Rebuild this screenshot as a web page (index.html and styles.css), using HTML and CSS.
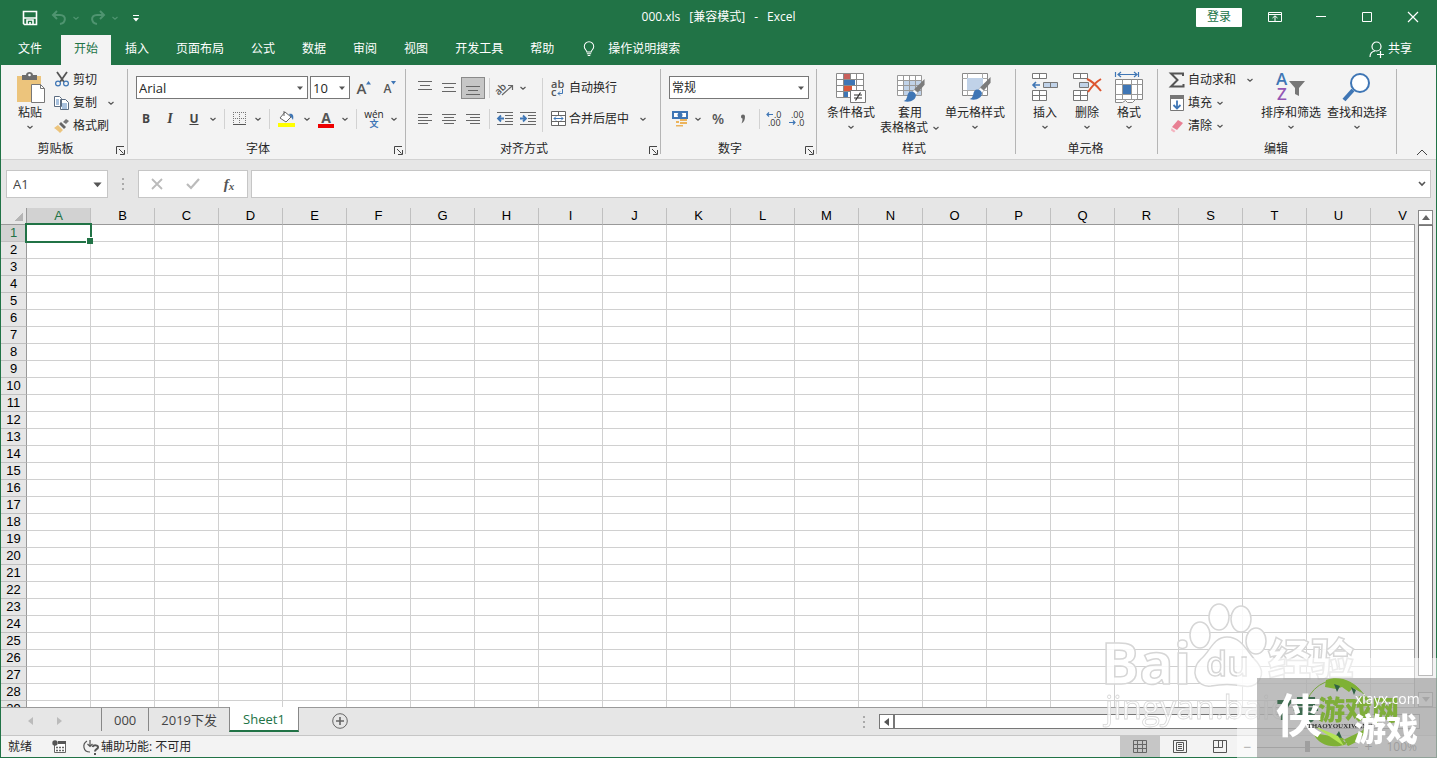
FILE: index.html
```html
<!DOCTYPE html>
<html lang="zh-CN">
<head>
<meta charset="utf-8">
<title>000.xls - Excel</title>
<link rel="stylesheet" href="styles.css">
</head>
<body>
<svg class="defs" aria-hidden="true">
  <symbol id="chev" viewBox="0 0 8 8"><path d="M1.5 3 4 5.2 6.5 3" fill="none" stroke="currentColor" stroke-width="1.2"/></symbol>
  <symbol id="tri" viewBox="0 0 8 8"><path d="M1 2.5h6L4 6z" fill="currentColor"/></symbol>
  <symbol id="launch" viewBox="0 0 9 9"><path d="M.5 8V.5H8M3 3l4.5 4.5M8.5 4v4.5H4" fill="none" stroke="#444"/></symbol>
  <symbol id="brush" viewBox="0 0 24 26"><path d="M23 0v6l-7 8-4-3z" fill="#7c7c7c"/><path d="m12 11 4 3-2 3-4-3z" fill="#fff" stroke="#999" stroke-width=".6"/><path d="M9 13c3 0 5 2 5 4 0 5-6 8-13 6 3-1 3-2 4-5 .5-3 2-5 4-5z" fill="#3f76b5"/></symbol>
</svg>
<div class="app">
  <header class="titlebar">
    <div class="quick">
      <button aria-label="保存"><svg width="16" height="16"><path d="M1.5 1.5h13v13h-12l-1-1z" fill="none" stroke="#fff" stroke-width="1.6"/><path d="M2 8h12M5 14v-4h6v4M8 14v-2" fill="none" stroke="#fff" stroke-width="1.6"/></svg></button>
      <button class="dim" aria-label="撤消"><svg width="16" height="16"><path d="M6 1 2 5l4 4M2 5h7c7 0 6 8 0 9" fill="none" stroke="currentColor" stroke-width="2"/></svg></button>
      <svg class="chev dim"><use href="#chev"/></svg>
      <button class="dim redo" aria-label="恢复"><svg width="16" height="16"><path d="m10 1 4 4-4 4M14 5H7c-7 0-6 8 0 9" fill="none" stroke="currentColor" stroke-width="2"/></svg></button>
      <svg class="chev dim"><use href="#chev"/></svg>
      <button class="custom" aria-label="自定义"><svg width="8" height="8"><path d="M1 1.5h6" stroke="#fff"/><path d="M1 4h6L4 7.500z" fill="#fff"/></svg></button>
    </div>
    <div class="doc"><span>000.xls</span><span>[兼容模式]</span><span>-</span><span>Excel</span></div>
    <div class="win">
      <button class="login">登录</button>
      <button aria-label="功能区显示选项"><svg width="14" height="12"><path d="M.5 1.500h13v9H.5zM.5 3.500h13M7 10V5M4.500 7 7 4.800 9.500 7" fill="none" stroke="#fff"/></svg></button>
      <button aria-label="最小化"><svg width="12" height="12"><path d="M1 5.500h10" stroke="#fff"/></svg></button>
      <button aria-label="最大化"><svg width="12" height="12"><path d="M1.500 1.500h9v9h-9z" fill="none" stroke="#fff"/></svg></button>
      <button aria-label="关闭"><svg width="12" height="12"><path d="m1 1 10 10M11 1 1 11" stroke="#fff" stroke-width="1.200"/></svg></button>
    </div>
  </header>
  <nav class="tabs">
    <button class="file">文件</button><button class="on">开始</button><button>插入</button><button>页面布局</button><button>公式</button><button>数据</button><button>审阅</button><button>视图</button><button>开发工具</button><button>帮助</button>
    <button class="tell"><svg width="12" height="16" viewBox="0 0 14 18"><path d="M4.500 12.500c0-2-3-3-3-6.500a5.500 5.500 0 0 1 11 0c0 3.500-3 4.500-3 6.500zM4.500 14.500h5M5.500 16.500h3" fill="none" stroke="#fff" stroke-width="1.200"/></svg>操作说明搜索</button>
    <button class="share"><svg width="16" height="17"><circle cx="7.500" cy="5.500" r="4.500" fill="none" stroke="#fff" stroke-width="1.200"/><path d="M1 16c0-3.500 2-5.500 5-6M8 13.500h7M11.500 10v7" fill="none" stroke="#fff" stroke-width="1.200"/></svg>共享</button>
  </nav>

  <section class="ribbon">
    <div class="group clip">
      <div class="body">
        <button class="big w42"><svg width="26" height="32"><path d="M0 4h24v26H0z" fill="#ecc47c"/><path d="M5 3h4c0-4 7-4 7 0h4v5H5z" fill="#6d6d6d"/><circle cx="12.500" cy="3" r="1.300" fill="#fff"/><path d="M14.500 12.500h9l4 4v14h-13z" fill="#fff" stroke="#777"/><path d="M23.500 12.500v4h4" fill="none" stroke="#777"/></svg><span>粘贴</span><svg class="chev"><use href="#chev"/></svg></button>
        <div class="stack">
          <button><i class="ico"><svg width="14" height="15"><path d="m2 0 7 10M12 0 5 10" stroke="#555" stroke-width="1.800"/><circle cx="3" cy="11.500" r="2.400" fill="none" stroke="#3f76b5" stroke-width="1.200"/><circle cx="11" cy="11.500" r="2.400" fill="none" stroke="#3f76b5" stroke-width="1.200"/></svg></i>剪切</button>
          <button><i class="ico"><svg width="16" height="14"><path d="M.5.5h5l2 2v8h-7zM6.500 3.500h5l3 3v7h-8z" fill="#fff" stroke="#5a6b80"/><path d="M2 4h3M2 6h3M2 8h3M8 8h5M8 10h5M8 12h5" stroke="#3f76b5" stroke-width=".9"/></svg></i>复制<svg class="chev gap"><use href="#chev"/></svg></button>
          <button><i class="ico"><svg width="16" height="14"><path d="m9 3 3-3 3 2-3 3z" fill="#777"/><path d="m7 3 5 5-2 2-5-5z" fill="#666"/><path d="m4 6 5 5-3 3C4 12 2 10 0 9z" fill="#ecc47c"/></svg></i>格式刷</button>
        </div>
      </div>
      <div class="cap"><span>剪贴板</span><button aria-label="剪贴板设置"><svg width="9" height="9"><use href="#launch"/></svg></button></div>
    </div>

    <div class="group font">
      <div class="body rows">
        <div class="row tight">
          <label class="sel fname"><select aria-label="字体"><option>Arial</option></select><svg class="chev"><use href="#tri"/></svg></label>
          <label class="sel fsize"><select aria-label="字号"><option>10</option></select><svg class="chev"><use href="#tri"/></svg></label>
          <button class="b24 grow" aria-label="增大字号"><span class="fa">A</span><svg width="5" height="4"><path d="M0 3.500h5L2.500 0z" fill="#3f76b5"/></svg></button>
          <button class="b24 shrink" aria-label="减小字号"><span class="fb">A</span><svg width="5" height="4"><path d="M0 0h5L2.500 3.500z" fill="#3f76b5"/></svg></button>
        </div>
        <div class="row marks">
          <button class="b24 bold">B</button><button class="b24 ital">I</button><button class="b24 under">U</button><button class="dd" aria-label="下划线"><svg class="chev"><use href="#chev"/></svg></button>
          <hr>
          <button class="b22" aria-label="边框"><svg width="14" height="14"><path d="M.5 0v13M6.500 0v13M12.500 0v13M0 .5h13M0 6.500h13" stroke="#777" stroke-dasharray="1 1"/><path d="M0 12.500h13" stroke="#555"/></svg></button><button class="dd" aria-label="边框选项"><svg class="chev"><use href="#chev"/></svg></button>
          <hr>
          <button class="b26" aria-label="填充颜色"><svg width="18" height="17"><path d="m7 2 6 5-5 5-6-4zM6 6V1" fill="#fff" stroke="#666"/><path d="M11 4c4-1 5 2 4 6-1-2-2-3-4-6z" fill="#3f76b5"/><path d="M0 13h17v4H0z" fill="#ff0"/></svg></button><button class="dd" aria-label="填充选项"><svg class="chev"><use href="#chev"/></svg></button>
          <button class="b24 color" aria-label="字体颜色"><span>A</span></button><button class="dd" aria-label="颜色选项"><svg class="chev"><use href="#chev"/></svg></button>
          <hr>
          <button class="b26 wen" aria-label="拼音"><span>wén</span><b>文</b></button><button class="dd" aria-label="拼音选项"><svg class="chev"><use href="#chev"/></svg></button>
        </div>
      </div>
      <div class="cap"><span>字体</span><button aria-label="字体设置"><svg width="9" height="9"><use href="#launch"/></svg></button></div>
    </div>

    <div class="group align">
      <div class="body cols">
        <div class="rows">
          <div class="row">
            <button class="b24" aria-label="顶端对齐"><svg width="14" height="14"><path d="M0 .5h14M2 4.500h10M0 8.500h14" class="ln"/></svg></button>
            <button class="b24" aria-label="垂直居中"><svg width="14" height="14"><path d="M0 2.500h14M2 6.500h10M0 10.500h14" class="ln"/></svg></button>
            <button class="b24 pressed" aria-label="底端对齐"><svg width="14" height="14"><path d="M0 5.500h14M2 9.500h10M0 13.500h14" class="ln"/></svg></button>
            <hr>
            <button class="b22" aria-label="方向"><svg width="18" height="16"><text x="-2" y="11" transform="rotate(-45 6 8)" class="abrot">ab</text><path d="m6 15 10-9M12 5.500h4.500V10" fill="none" stroke="#666" stroke-width="1.200"/></svg></button><button class="dd" aria-label="方向选项"><svg class="chev"><use href="#chev"/></svg></button>
          </div>
          <div class="row">
            <button class="b24" aria-label="左对齐"><svg width="14" height="12"><path d="M0 1.500h14M0 4.500h10M0 7.500h14M0 10.500h10" class="ln"/></svg></button>
            <button class="b24" aria-label="居中"><svg width="14" height="12"><path d="M0 1.500h14M2 4.500h10M0 7.500h14M2 10.500h10" class="ln"/></svg></button>
            <button class="b24" aria-label="右对齐"><svg width="14" height="12"><path d="M0 1.500h14M4 4.500h10M0 7.500h14M4 10.500h10" class="ln"/></svg></button>
            <hr>
            <button class="b22" aria-label="减少缩进"><svg width="16" height="14"><path d="M0 .5h16M8 3.500h8M8 6.500h8M8 9.500h8M0 12.500h16" class="ln"/><path d="M7 6.500H1M4 3.500l-3 3 3 3" fill="none" stroke="#3f76b5" stroke-width="1.800"/></svg></button>
            <button class="b24" aria-label="增加缩进"><svg width="16" height="14"><path d="M0 .5h16M8 3.500h8M8 6.500h8M8 9.500h8M0 12.500h16" class="ln"/><path d="M0 6.500h6M3 3.500l3 3-3 3" fill="none" stroke="#3f76b5" stroke-width="1.800"/></svg></button>
          </div>
        </div>
        <hr class="tall">
        <div class="rows">
          <div class="row"><button class="txt"><i class="ico"><svg width="14" height="18"><text x="0" y="9" class="ab">ab</text><text x="0" y="17" class="ab">c</text><path d="M11.500 10v4.500H7M9 12.500l-2 2 2 2" fill="none" stroke="#3f76b5"/></svg></i>自动换行</button></div>
          <div class="row"><button class="txt"><i class="ico"><svg width="15" height="15"><path d="M.5.5h14v14H.5zM.5 4.500h14M.5 10.500h14M7.500 1v3M7.500 11v3" fill="#fff" stroke="#666"/><path d="M3 7.500h9M5 5.500l-2 2 2 2M10 5.500l2 2-2 2" fill="none" stroke="#3f76b5"/></svg></i>合并后居中<svg class="chev gap"><use href="#chev"/></svg></button></div>
        </div>
      </div>
      <div class="cap"><span>对齐方式</span><button aria-label="对齐设置"><svg width="9" height="9"><use href="#launch"/></svg></button></div>
    </div>

    <div class="group num">
      <div class="body rows">
        <div class="row"><label class="sel nfmt"><select aria-label="数字格式"><option>常规</option></select><svg class="chev"><use href="#tri"/></svg></label></div>
        <div class="row">
          <button class="b22" aria-label="会计格式"><svg width="16" height="17"><path d="M0 1h16v8H0z" fill="#3f76b5"/><path d="M2 3h12v4H2z" fill="#fff"/><circle cx="8" cy="5" r="2.500" fill="#3f76b5"/><path d="M8 9h7v2H8zM8 12h7v2H8zM4 15h7v1.500H4zM4 11h3v2H4z" fill="#ecb45c"/></svg></button><button class="dd" aria-label="会计选项"><svg class="chev"><use href="#chev"/></svg></button>
          <button class="b26 pct">%</button><button class="b24 comma" aria-label="千位分隔"><svg width="6" height="10"><path d="M1 2.500a2 2 0 1 1 4 0C5 6 4 8 1.500 9.500 2 8 2.500 7 2.500 4.500 1.500 4.500 1 3.500 1 2.500z" fill="#666"/></svg></button>
          <hr>
          <button class="b20" aria-label="增加小数位数"><svg width="16" height="16"><text x="8" y="7" class="dec">.0</text><text x="2" y="15" class="dec">.00</text><path d="M7 3.500H1M3 1.500l-2 2 2 2" fill="none" stroke="#3f76b5" stroke-width="1.200"/></svg></button>
          <button class="b26" aria-label="减少小数位数"><svg width="16" height="16"><text x="2" y="7" class="dec">.00</text><text x="8" y="15" class="dec">.0</text><path d="M0 11.500h6M4 9.500l2 2-2 2" fill="none" stroke="#3f76b5" stroke-width="1.200"/></svg></button>
        </div>
      </div>
      <div class="cap"><span>数字</span><button aria-label="数字设置"><svg width="9" height="9"><use href="#launch"/></svg></button></div>
    </div>

    <div class="group styles">
      <div class="body">
        <button class="big w56"><svg width="30" height="32"><path d="M.5 1.500h27v24H.5z" fill="#fff"/><path d="M8 2h6v5H8z" fill="#c9605c"/><path d="M8 8h11v5H8z" fill="#3f76b5"/><path d="M8 14h8v5H8z" fill="#d9583b"/><path d="M8 20h4v5H8z" fill="#3f76b5"/><path d="M.5 1.500h27v24H.5zM.5 7.500h27M.5 13.500h27M.5 19.500h27M7.500 1.500v24M14.500 1.500v6M20.500 1.500v24" fill="none" stroke="#8a8a8a"/><path d="M14.500 18.500h15v12h-15z" fill="#fff" stroke="#777"/><path d="M18 23h8M18 26h8M24.500 20.500l-5 8" stroke="#333" stroke-width="1.200"/></svg><span>条件格式</span><svg class="chev"><use href="#chev"/></svg></button>
        <button class="big w62 two"><svg width="30" height="32"><path d="M2.500 3.500h24v20h-24z" fill="#fff"/><path d="M8 9h18v14H8z" fill="#c0d2e8"/><path d="M2.500 3.500h24v20h-24zM2.500 8.500h24M2.500 13.500h24M2.500 18.500h24M8.500 3.500v20M14.500 3.500v20M20.500 3.500v20" fill="none" stroke="#999"/><use href="#brush" x="7" y="7" width="24" height="25"/></svg><span>套用</span><span class="ln2">表格格式<svg class="chev"><use href="#chev"/></svg></span></button>
        <button class="big w68"><svg width="30" height="32"><path d="M2.500 1.500h25v22h-25z" fill="#fff" stroke="#888"/><path d="M2.500 6.500h25M2.500 18.500h25M7.500 1.500v22M22.500 1.500v22" stroke="#aaa"/><path d="M7 6h16v12H7z" fill="#c0d2e8"/><use href="#brush" x="8" y="5" width="24" height="25"/></svg><span>单元格样式</span><svg class="chev"><use href="#chev"/></svg></button>
      </div>
      <div class="cap"><span>样式</span></div>
    </div>

    <div class="group cells">
      <div class="body">
        <button class="big w42"><svg width="28" height="32"><path d="M1.500 1.500h14v5h-14zM8.500 1.500v5M1.500 18.500h14v10h-14zM1.500 23.500h14M8.500 18.500v10" fill="#fff" stroke="#777"/><path d="M12.500 10.500h14v5h-14zM19.500 10.500v5" fill="#c0d2e8" stroke="#777"/><path d="M9 13H2M5 10l-3 3 3 3" fill="none" stroke="#3f76b5" stroke-width="1.600"/></svg><span>插入</span><svg class="chev"><use href="#chev"/></svg></button>
        <button class="big w42"><svg width="30" height="32"><path d="M1.500 1.500h14v5h-14zM8.500 1.500v5M1.500 18.500h14v10h-14zM1.500 23.500h14M8.500 18.500v10" fill="#fff" stroke="#777"/><path d="M7.500 10.500h9v5h-9z" fill="#c0d2e8" stroke="#777"/><path d="M15 7c5 2 10 7 14 12M29 7c-5 3-9 7-13 13" fill="none" stroke="#dd5530" stroke-width="2"/></svg><span>删除</span><svg class="chev"><use href="#chev"/></svg></button>
        <button class="big w42"><svg width="28" height="32"><path d="M.5 0v5M23.500 0v5M3 2.500h19M6 0 3 2.500 6 5M19 0l3 2.500L19 5" fill="none" stroke="#3f76b5" stroke-width="1.200"/><path d="M.5 7.500h27v20h-7l-3 3h-5l-2-2-3 2h-7z" fill="#fff" stroke="#888"/><path d="M.5 12.500h27M.5 22.500h27M7.500 7.500v20M16.500 7.500v20M22.500 7.500v20M.5 27.500h20" stroke="#999"/><path d="M8 13h8v9H8z" fill="#3f76b5"/></svg><span>格式</span><svg class="chev"><use href="#chev"/></svg></button>
      </div>
      <div class="cap"><span>单元格</span></div>
    </div>

    <div class="group edit">
      <div class="body">
        <div class="stack">
          <button><i class="ico"><svg width="16" height="16"><path d="M14 4V1.500H2L8.500 8 2 14.500h12.500V12" fill="none" stroke="#555" stroke-width="2"/></svg></i>自动求和<svg class="chev gap"><use href="#chev"/></svg></button>
          <button><i class="ico"><svg width="14" height="16"><path d="M.5 1.500h13v14H.5z" fill="#fff" stroke="#777"/><path d="M0 0h14v4H0z" fill="#777"/><path d="M7 5.500v8M3.500 10 7 13.500l3.500-3.500" fill="none" stroke="#3f76b5" stroke-width="1.800"/></svg></i>填充<svg class="chev"><use href="#chev"/></svg></button>
          <button><i class="ico"><svg width="14" height="14"><path d="m8 1 5 3-6 7-5-3z" fill="#e87f93"/><path d="m1.500 9 4 3-1.500 1.500L1 11.500z" fill="#f4b3bf"/></svg></i>清除<svg class="chev"><use href="#chev"/></svg></button>
        </div>
        <button class="big w66"><svg width="30" height="32"><text x="0" y="13" class="az" fill="#3f76b5">A</text><text x="1" y="28" class="az" fill="#9457b5">Z</text><path d="M13 9h16l-6 7v8l-4-2v-6z" fill="#777"/></svg><span>排序和筛选</span><svg class="chev"><use href="#chev"/></svg></button>
        <button class="big w66"><svg width="30" height="32"><circle cx="18" cy="11" r="9" fill="#fff" stroke="#3f76b5" stroke-width="2"/><path d="M11 18 2 28" stroke="#3f76b5" stroke-width="4"/></svg><span>查找和选择</span><svg class="chev"><use href="#chev"/></svg></button>
      </div>
      <div class="cap"><span>编辑</span></div>
    </div>
    <button class="fold" aria-label="折叠功能区"><svg width="12" height="7"><path d="m1 6 5-5 5 5" fill="none" stroke="#444"/></svg></button>
  </section>

  <section class="formula">
    <label class="namebox"><input aria-label="名称框" value="A1"><svg class="chev"><use href="#tri"/></svg></label>
    <svg class="dots" width="2" height="12"><path d="M1 0v12" stroke="#aaa" stroke-width="2" stroke-dasharray="2 3"/></svg>
    <div class="fx">
      <button aria-label="取消"><svg width="12" height="12"><path d="m1 1 10 10M11 1 1 11" stroke="#bbb" stroke-width="1.800"/></svg></button>
      <button aria-label="输入"><svg width="14" height="12"><path d="m1 6 4 4 8-9" fill="none" stroke="#bbb" stroke-width="2.200"/></svg></button>
      <button class="fn">f<small>x</small></button>
    </div>
    <label class="entry"><input aria-label="编辑栏"><svg width="8" height="6"><path d="m1 1 3 3 3-3" fill="none" stroke="#555" stroke-width="1.600"/></svg></label>
  </section>

  <main class="sheet">
    <div class="view"><table id="grid"></table></div>
    <div class="vscroll">
      <button aria-label="向上"><svg width="8" height="5"><path d="M0 5h8L4 0z" fill="#666"/></svg></button>
      <div class="thumb"></div><div class="track"></div>
      <button class="down" aria-label="向下"><svg width="8" height="5"><path d="M0 0h8L4 5z" fill="#888"/></svg></button>
    </div>
  </main>

  <footer class="sheets">
    <div class="nav"><svg width="5" height="8"><path d="M5 0v8L0 4z" fill="#bbb"/></svg><svg width="5" height="8"><path d="M0 0v8l5-4z" fill="#bbb"/></svg></div>
    <button class="s">000</button><button class="s">2019下发</button><button class="s on">Sheet1</button>
    <button class="add" aria-label="新工作表"><svg width="16" height="16"><circle cx="8" cy="8" r="7.300" fill="none" stroke="#666"/><path d="M8 4v8M4 8h8" stroke="#666" stroke-width="1.600"/></svg></button>
    <svg class="dots" width="2" height="12"><path d="M1 0v12" stroke="#aaa" stroke-width="2" stroke-dasharray="2 3"/></svg>
    <div class="hscroll"><button aria-label="向左"><svg width="5" height="8"><path d="M5 0v8L0 4z" fill="#555"/></svg></button><div></div></div>
  </footer>
  <div class="status">
    <span>就绪</span>
    <svg width="14" height="13"><path d="M2.500 5v7.500h11v-9H6" fill="#fff" stroke="#666"/><path d="M6 1h8v3H6z" fill="#555"/><circle cx="3" cy="3" r="2.700" fill="#555"/><path d="M4 7.500h8M4 10.500h8" stroke="#666" stroke-width="1.400" stroke-dasharray="2 1"/></svg>
    <span class="acc"><svg width="18" height="16"><path d="M4 2C-1 5 0 13 7 13M7 1v6M4.500 5 7 7.500 9.500 5" fill="none" stroke="#555" stroke-width="1.200"/><path d="M9.500 8c1-2.500 6-2 5.500.5-.3 2-3 1.500-3 4M12 14v2" fill="none" stroke="#555" stroke-width="2"/></svg>辅助功能: 不可用</span>
    <div class="views">
      <button class="on" aria-label="普通"><svg width="14" height="14"><path d="M.5.5h13v12H.5zM.5 4.500h13M.5 8.500h13M4.500.5v12M9.500.5v12" fill="none" stroke="#666"/></svg></button>
      <button aria-label="页面布局"><svg width="14" height="14"><path d="M.5.500h13v12H.5zM3.500 2.500h7v8h-7zM5 4.500h4M5 6.500h4M5 8.500h4" fill="none" stroke="#555"/></svg></button>
      <button aria-label="分页预览"><svg width="14" height="14"><path d="M.5.500h13v12H.5zM.5 7.500h9M5.500.5v7M9.500.5v7" fill="none" stroke="#555"/></svg></button>
    </div>
    <div class="zoom"><button aria-label="缩小">−</button><input type="range" aria-label="缩放" value="50"><button aria-label="放大">+</button><span>100%</span></div>
  </div>
</div>

<svg class="mark" width="340" height="160" viewBox="1097 598 340 160">
  <g class="ghost">
    <text x="1101" y="684" class="bai">Bai</text>
    <ellipse cx="1200" cy="635" rx="10" ry="13"/><ellipse cx="1219" cy="617" rx="10" ry="13"/><ellipse cx="1241" cy="619" rx="10" ry="13"/><ellipse cx="1256" cy="641" rx="10" ry="13"/>
    <path d="M1227 637c-14 0-17 15-26 22-12 11-5 29 10 27 10-2 22-2 32 0 16 3 24-12 14-24-10-10-15-25-30-25z"/>
    <text x="1206" y="676" class="du">du</text>
    <text x="1268" y="675" class="jy">经验</text>
  </g>
  <text x="1105" y="719" class="url">jingyan.baidu.com</text>
  <path d="M1237 658h200v100h-200z" fill="#fff" opacity=".5"/>
  <path d="M1257 678h180v80h-180z" fill="#929292" opacity=".6"/>
  <circle cx="1337" cy="712" r="32" fill="none" stroke="#77a63b"/>
  <path d="M1326 680c12-4 27-1 36 13l-9-5-4 4-7-5-6 2-11-2zM1313 733c6 13 20 16 34 11l-4-6zM1343 740l23-11c-3 9-10 14-18 17z" fill="#7fb135"/>
  <path d="m1334 684 6 2-3 6zM1351 687l5 3-2 5zM1335 737l4-6 3 7z" fill="#316345"/>
  <text x="1276" y="720" class="seven">7号</text>
  <text x="1318" y="720" class="youxi">游戏网</text>
  <path d="m1314 726 30 20-6-10z" fill="#b3e456"/>
  <text x="1276" y="732" class="xia">侠</text>
  <text x="1307" y="728" class="tiny">THAOYOUXIWANG</text>
  <text x="1354" y="741" class="yx">游戏</text>
  <text x="1355" y="704" class="dom">xiayx.com</text>
</svg>
<script src="grid.js"></script>
</body>
</html>
```
FILE: styles.css
```css
* { box-sizing: border-box; }
body { margin: 0; font: 12px/16px "Open Sans", "Noto Sans CJK SC", sans-serif; color: #262626; background: #fff; }
button, input, select { font: inherit; color: inherit; border: 0; padding: 0; margin: 0; background: none; }
button { display: flex; align-items: center; justify-content: center; white-space: nowrap; }
svg { flex: none; display: block; overflow: visible; }
.defs { position: absolute; width: 0; height: 0; }
.chev { width: 8px; height: 8px; color: #555; }
.app { height: 100vh; display: flex; flex-direction: column; overflow: hidden; background: #e6e6e6; border: 1px solid #217346; border-top: 0; }

.titlebar { height: 34px; flex: none; display: grid; grid-template-columns: 1fr auto 1fr; align-items: center; background: #217346; color: #fff; }
.doc { display: flex; gap: 9px; }
.quick { display: flex; align-items: center; padding: 1px 0 0 21px; gap: 5px; }
.quick button:first-child { margin-right: 8px; }
.quick .chev { color: #4f9470; }
.quick .redo { margin-left: 5px; }
.dim { color: #4f9470; }
.custom { margin-left: 8px; }
.win { display: flex; justify-content: flex-end; align-items: center; }
.win button { width: 46px; height: 32px; }
.win .login { height: 19px; margin-right: 10px; background: #fff; color: #217346; border-radius: 1px; }

.tabs { height: 31px; flex: none; display: flex; gap: 1px; padding-left: 4px; background: #217346; color: #fff; }
.tabs button { padding: 0 13px; height: 30px; margin-top: 1px; padding-bottom: 2px; }
.tabs .file { margin-right: 5px; }
.tabs .on { background: #f3f3f3; color: #217346; }
.tabs .tell { gap: 13px; padding-left: 15px; }
.tabs .share { margin-left: auto; padding-right: 24px; gap: 3px; }

.ribbon { flex: none; display: flex; height: 95px; background: #f3f3f3; border-bottom: 1px solid #d2d2d2; }
.group { position: relative; display: flex; flex-direction: column; justify-content: space-between; padding: 3px 0 1px 8px; flex: none; }
.group::after { content: ""; position: absolute; right: 0; top: 4px; bottom: 5px; border-right: 1px solid #b5b5b5; }
.clip { width: 127px; }
.font { width: 278px; }
.align { width: 255px; padding-left: 7px; }
.num { width: 156px; }
.styles { width: 199px; padding-left: 6px; }
.cells { width: 142px; }
.edit { width: 239px; }
.body { display: flex; }
.cap { display: flex; align-items: center; height: 18px; margin-left: -8px; padding-right: 3px; }
.cap span { flex: 1; text-align: center; }
.cap button { margin-top: 3px; padding-left: 6px; }
.big { flex-direction: column; justify-content: flex-start; height: 70px; padding-top: 4px; }
.big > svg:first-child { margin-bottom: 1px; }
.big > .chev { margin-top: 2px; }
.two span { line-height: 15px; }
.two .ln2 { display: flex; align-items: center; gap: 4px; }
.w42 { width: 42px; } .w56 { width: 56px; } .w62 { width: 62px; } .w66 { width: 66px; } .w68 { width: 68px; }
.stack { display: flex; flex-direction: column; align-items: flex-start; }
.stack button { height: 23px; }
.edit .stack { width: 92px; }
.ico { width: 22px; display: flex; justify-content: center; font-style: normal; }
.stack .chev { margin-left: 4px; }
.stack .chev.gap, .txt .chev.gap { margin-left: 10px; }
.rows { display: flex; flex-direction: column; padding-top: 4px; }
.row { display: flex; align-items: center; height: 31px; }
.row hr, .tall { width: 1px; height: 20px; border: 0; margin: 0 4px; background: #d2d2d2; }
.tall { height: 54px; align-self: center; margin-top: 8px; margin-left: 2px; }
.tight { gap: 2px; }
.marks { margin-left: -2px; }
.b20 { width: 20px; } .b22 { width: 22px; } .b24 { width: 24px; } .b26 { width: 26px; } .dd { width: 14px; }
.row button { height: 22px; }
.sel { position: relative; display: flex; align-items: center; height: 23px; background: #fff; border: 1px solid #777; }
.sel select { appearance: none; width: 100%; height: 100%; padding-left: 2px; }
.sel .chev { position: absolute; right: 3px; pointer-events: none; }
.fname { width: 172px; font-size: 13px; }
.fsize { width: 40px; font-size: 13px; }
.nfmt { width: 140px; }
.grow, .shrink { align-items: flex-start; color: #555; font-weight: 600; }
.fa { font-size: 15px; line-height: 22px; }
.fb { font-size: 12px; line-height: 24px; }
.grow svg, .shrink svg { margin-top: 4px; }
.bold, .ital, .under, .color { color: #444; font-weight: 700; }
.ital { font-family: "Liberation Serif", serif; font-style: italic; font-size: 14px; }
.under { text-decoration: underline; }
.color span { width: 16px; height: 18px; font-size: 14px; line-height: 15px; border-bottom: 4px solid #e00; color: #555; }
.wen { flex-direction: column; line-height: 9px; font-size: 10px; }
.wen b { color: #3f76b5; font-size: 9px; }
.pressed { background: #c6c6c6; border: 1px solid #8a8a8a; }
.ln { stroke: #666; fill: none; }
.abrot { font-size: 10px; font-weight: 600; fill: #555; }
.ab { font-size: 11px; font-weight: 600; fill: #555; }
.dec { font-size: 9px; fill: #333; }
.pct { font-size: 14px; font-weight: 600; color: #555; }
.az { font-size: 17px; font-weight: 600; }
.fold { margin-left: auto; align-self: flex-end; padding: 0 8px 3px; }

.formula { flex: none; display: flex; height: 48px; padding: 10px 5px; }
.namebox, .fx, .entry { display: flex; align-items: center; height: 28px; background: #fff; border: 1px solid #c6c6c6; }
.namebox { width: 102px; padding: 0 6px; color: #444; }
.namebox input { flex: 1; min-width: 0; font-size: 13px; }
.namebox .chev { width: 11px; height: 11px; margin-right: -2px; }
.dots { align-self: center; margin: 0 14px; }
.fx { width: 110px; }
.fx button { width: 36px; }
.fn { font: italic 600 15px "Liberation Serif", serif; color: #555; }
.fn small { font-size: 11px; padding-top: 4px; }
.entry { flex: 1; margin-left: 3px; padding-right: 4px; }
.entry input { flex: 1; height: 100%; }

.sheet { flex: 1; min-height: 0; display: flex; }
.view { flex: 1; min-width: 0; overflow: hidden; position: relative; }
.view::after { content: ""; position: absolute; right: 0; top: 16px; bottom: 0; border-right: 1px solid #999; }
#grid { table-layout: fixed; width: 1434px; border-collapse: separate; border-spacing: 0; font: 13px/16px "Liberation Sans", sans-serif; color: #000; background: #fff; }
#grid th, #grid td { width: 64px; height: 17px; padding: 0; border-right: 1px solid #d0d0d0; border-bottom: 1px solid #d0d0d0; }
#grid th { font-weight: 400; background: #e6e6e6; border-color: #c0c0c0; }
#grid thead th { border-bottom-color: #999; }
#grid th:first-child { width: 26px; border-right-color: #999; }
#grid .corner { background: linear-gradient(135deg, transparent 0 50%, #b5b5b5 50%) 13px 4px / 9px 9px no-repeat #e6e6e6; border-right-color: #e6e6e6; }
#grid th.sel-head { background: #d2d2d2; color: #217346; }
#grid .cell-on { position: relative; }
.cursor { position: absolute; z-index: 2; left: -2px; right: -2px; top: -2px; bottom: -2px; border: 2px solid #217346; }
.cursor::after { content: ""; position: absolute; right: -3px; bottom: -3px; width: 6px; height: 6px; background: #217346; border: 1px solid #fff; border-width: 1px 0 0 1px; }
.vscroll { width: 21px; display: flex; flex-direction: column; padding: 2px 3px 0; }
.vscroll button { height: 15px; flex: none; background: #fff; border: 1px solid #888; }
.thumb { flex: 1; background: #fff; border: 1px solid #777; }
.track { height: 16px; }

.sheets { flex: none; height: 29px; display: flex; align-items: flex-start; border-top: 1px solid #999; border-bottom: 1px solid #c6c6c6; font-size: 13px; }
.nav { display: flex; gap: 24px; width: 100px; padding: 9px 0 0 27px; }
.s { height: 23px; padding: 0 12px; border-left: 1px solid #888; color: #444; }
.s.on { height: 25px; margin-top: -1px; padding: 0 13px; background: #fff; color: #217346; border-right: 1px solid #888; border-bottom: 2px solid #217346; }
.add { margin: 5px auto 0 33px; }
.hscroll { width: 541px; height: 15px; margin: 6px 16px 0 0; display: flex; background: #fff; border: 1px solid #777; }
.hscroll button { width: 13px; }
.hscroll div { flex: 1; border-left: 2px solid #777; }
.status { flex: none; height: 21px; display: flex; align-items: center; gap: 20px; padding-left: 7px; background: #f3f3f3; }
.acc { display: flex; align-items: center; margin-left: -3px; }
.views { margin-left: auto; display: flex; align-self: stretch; }
.views button { width: 40px; }
.views .on { background: #c6c6c6; }
.zoom { display: flex; align-items: center; color: #555; margin-left: -18px; padding-right: 19px; gap: 5px; }
.zoom button { width: 10px; font-size: 14px; }
.zoom input { appearance: none; width: 101px; height: 12px; background: linear-gradient(#777, #777) 0 6px / 100% 1px no-repeat; }
.zoom input::-webkit-slider-thumb { appearance: none; width: 5px; height: 11px; background: #666; }
.zoom span { padding-left: 8px; }

.mark { position: fixed; right: 0; bottom: 0; z-index: 5; overflow: hidden; pointer-events: none; font-family: "Open Sans", "Noto Sans CJK SC", sans-serif; }
.ghost { fill: #fff; fill-opacity: .85; stroke: #d6d6d6; stroke-width: 1.5; }
.bai { font: 700 57px "Open Sans", sans-serif; }
.du { font: 600 34px "Open Sans", sans-serif; }
.jy { font: 900 43px "Noto Sans CJK SC", sans-serif; }
.url { font-size: 33px; fill: #fff; fill-opacity: .8; stroke: #d8d8d8; stroke-width: .8; }
.seven { font: 900 27px "Noto Sans CJK SC", sans-serif; fill: #3f6b50; }
.youxi { font: 900 27px "Noto Sans CJK SC", sans-serif; fill: #7fae3a; }
.tiny { font: 700 7px "Liberation Serif", serif; fill: #333; }
.xia { font: 700 46px "Noto Sans CJK SC", sans-serif; fill: #fff; }
.yx { font: 900 32px "Noto Sans CJK SC", sans-serif; fill: #fff; }
.dom { font-size: 14px; fill: #fff; }
```
FILE: grid.js
```js
const grid = document.getElementById('grid');
const columns = 'ABCDEFGHIJKLMNOPQRSTUV'.split('');
const rowCount = 29;

const head = grid.createTHead().insertRow();
const addHeading = (row, text, className) => {
  const th = document.createElement('th');
  th.textContent = text;
  if (className) th.className = className;
  row.append(th);
};
addHeading(head, '', 'corner');
columns.forEach((name, i) => addHeading(head, name, i === 0 ? 'sel-head' : ''));

const body = grid.createTBody();
for (let r = 1; r <= rowCount; r++) {
  const row = body.insertRow();
  addHeading(row, r, r === 1 ? 'sel-head' : '');
  columns.forEach((_, c) => {
    const cell = row.insertCell();
    if (r === 1 && c === 0) {
      cell.className = 'cell-on';
      cell.innerHTML = '<div class="cursor"></div>';
    }
  });
}
```
